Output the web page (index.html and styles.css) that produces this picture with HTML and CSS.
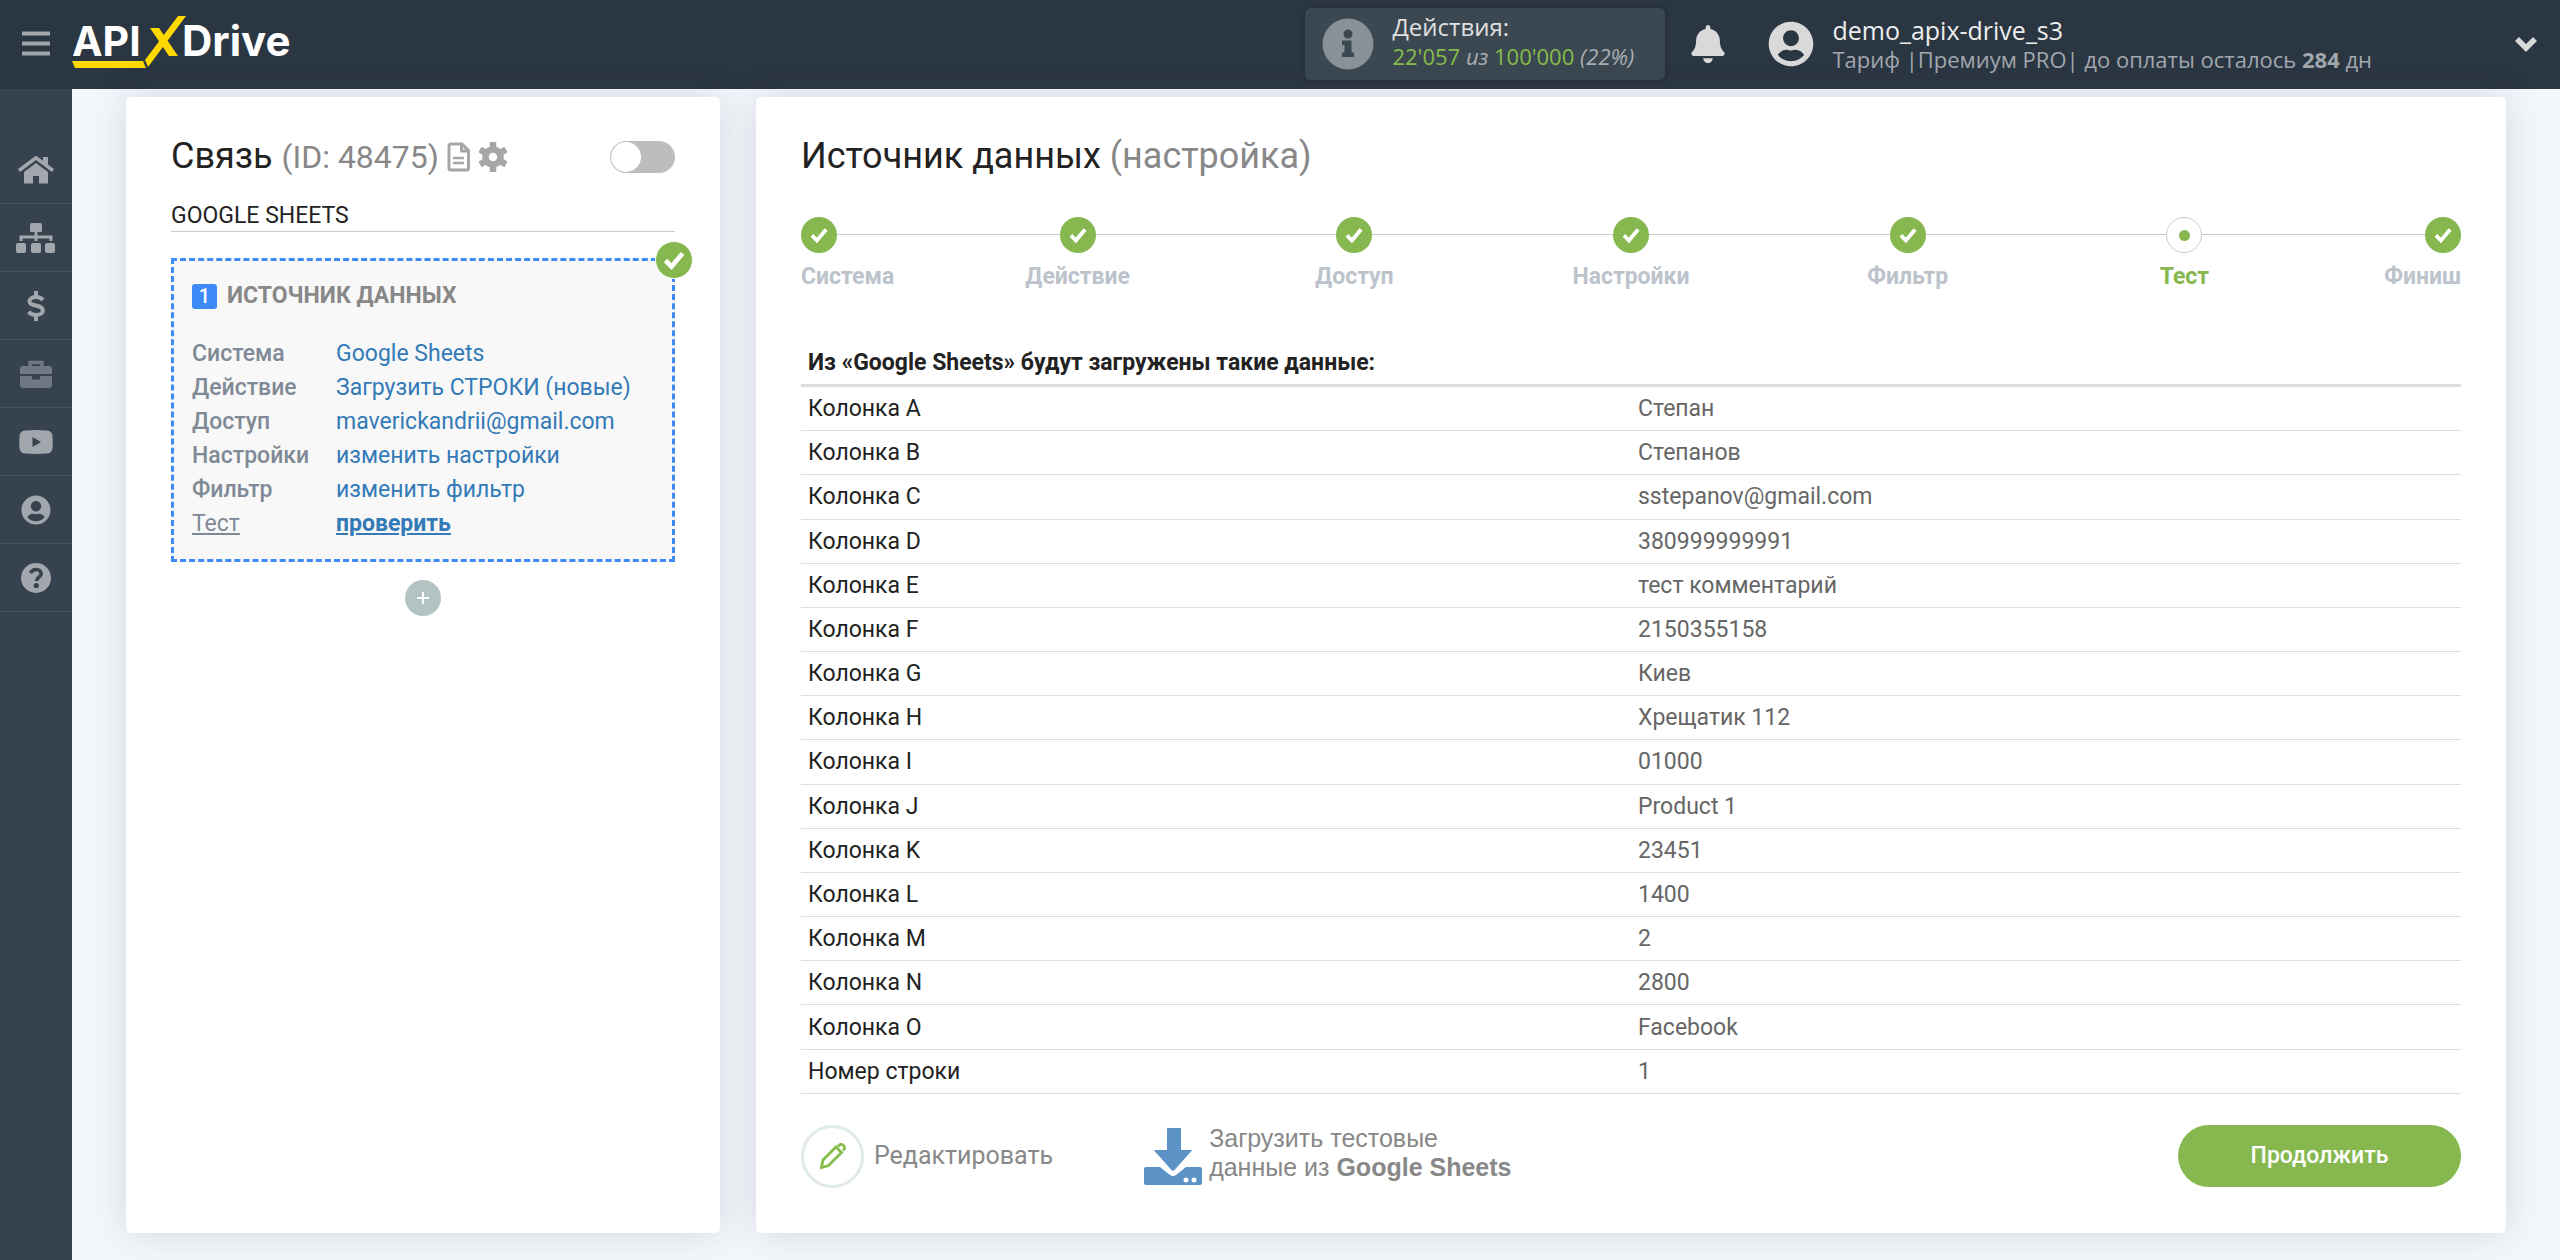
FILE: index.html
```html
<!DOCTYPE html>
<html lang="ru">
<head>
<meta charset="utf-8">
<title>ApiX-Drive</title>
<meta name="viewport" content="width=device-width, initial-scale=1">
<link rel="stylesheet" href="styles.css">
</head>
<body>
<svg class="defs" aria-hidden="true">
  <symbol id="i-check" viewBox="0 0 24 24"><path d="M3.500 12.500 9.500 18.500 20.500 5.500" fill="none" stroke="currentColor" stroke-width="4.600"/></symbol>
  <symbol id="i-user" viewBox="0 0 496 512"><path fill="currentColor" d="M248 8C111 8 0 119 0 256s111 248 248 248 248-111 248-248S385 8 248 8zm0 96c48.600 0 88 39.400 88 88s-39.400 88-88 88-88-39.400-88-88 39.400-88 88-88zm0 344c-58.700 0-111.300-26.600-146.500-68.200 18.800-35.400 55.600-59.800 98.500-59.800 2.400 0 4.800.4 7.100 1.100 13 4.200 26.600 6.900 40.900 6.900 14.300 0 28-2.700 40.900-6.900 2.300-.7 4.700-1.100 7.100-1.100 42.900 0 79.700 24.400 98.500 59.800C359.300 421.400 306.700 448 248 448z"/></symbol>
</svg>

<header class="topbar">
  <button class="icon-button burger" type="button" aria-label="Меню">
    <svg width="28" height="26" viewBox="0 0 28 26"><path d="M0 .5h28v4H0zM0 10.500h28v4H0zM0 20.500h28v4H0z" fill="#a2a7ad"/></svg>
  </button>
  <a class="logo" href="#" aria-label="APIXDrive">
    <svg width="222" height="56" viewBox="0 0 222 56">
      <text class="logo-text" x="0" y="40">API</text>
      <text class="logo-text drive" x="110" y="40">Drive</text>
      <path d="M0 45h71l3 7H3zM106 0h8L76 51l-3-7z" fill="#ffd800"/>
      <path d="M78 12h9l19 28h-9z" fill="#ffd800"/>
    </svg>
  </a>
  <div class="quota">
    <svg width="52" height="52" viewBox="0 0 52 52"><circle cx="26" cy="26" r="25.500" fill="#8a9197"/><circle cx="26" cy="16" r="4.500" fill="#3b4851"/><path d="M20 22.500h9.500v12H32v4.500H20v-4.500h2.500V27H20z" fill="#3b4851"/></svg>
    <div class="quota-text">
      <div class="quota-title">Действия:</div>
      <div class="quota-value"><span class="green">22'057</span> <i>из</i> <span class="green">100'000</span> <i>(22%)</i></div>
    </div>
  </div>
  <button class="icon-button bell" type="button" aria-label="Уведомления">
    <svg width="34" height="38" viewBox="0 0 448 512"><path fill="#d9d9d9" d="M224 512c35.300 0 63.900-28.700 63.900-64H160.100c0 35.300 28.600 64 63.900 64zm215.400-149.700c-19.300-20.800-55.500-52-55.500-154.300 0-77.700-54.500-139.900-127.900-155.200V32c0-17.700-14.300-32-32-32s-32 14.300-32 32v20.800C118.600 68.100 64.100 130.300 64.100 208c0 102.300-36.200 133.500-55.500 154.300-6 6.400-8.700 14.100-8.600 21.700.1 16.400 13 32 32.100 32h383.800c19.100 0 32-15.600 32.100-32 .1-7.600-2.600-15.300-8.600-21.700z"/></svg>
  </button>
  <div class="account">
    <svg class="avatar" width="46" height="46"><use href="#i-user"/></svg>
    <div>
      <div class="account-name">demo_apix-drive_s3</div>
      <div class="account-plan">Тариф |Премиум PRO| до оплаты осталось <b>284</b> дн</div>
    </div>
  </div>
  <button class="icon-button chevron" type="button" aria-label="Открыть меню">
    <svg width="24" height="16" viewBox="0 0 24 16"><path d="M3 3l9 9 9-9" fill="none" stroke="#d9d9d9" stroke-width="5.500"/></svg>
  </button>
</header>

<div class="shell">
  <nav class="sidebar">
    <a href="#" aria-label="Главная"><svg width="36" height="28" viewBox="0 0 36 28"><path d="M1 14.500 18 1.800 35 14.500" fill="none" stroke="currentColor" stroke-width="3.600"/><path d="M25 1h5v9l-5-4zM18 7 30 16v11.500h-9V20h-6v7.500H6V16z" fill="currentColor"/></svg></a>
    <a href="#" aria-label="Связи"><svg width="40" height="30" viewBox="0 0 40 30" fill="currentColor"><rect x="14" width="12" height="9" rx="1.500"/><rect y="20" width="10" height="10" rx="2"/><rect x="15" y="20" width="10" height="10" rx="2"/><rect x="29" y="20" width="10" height="10" rx="2"/><path d="M5 18v-4h30v4M20 8v10" fill="none" stroke="currentColor" stroke-width="3"/></svg></a>
    <a href="#" aria-label="Оплата"><svg width="18" height="30" viewBox="0 0 18 30"><path d="M16 9C14 6.500 12 6 9 6 5.500 6 2.500 7.500 2.500 10.500 2.500 16 15.800 13 15.800 19.500 15.800 22.500 12.500 24 9 24 6 24 3.500 23.200 1.500 20.800M9 0v7M9 23v7" fill="none" stroke="currentColor" stroke-width="4"/></svg></a>
    <a class="dim" href="#" aria-label="Проекты"><svg width="32" height="28" viewBox="0 0 32 28"><path d="M10 7V2.500h12V7" fill="none" stroke="currentColor" stroke-width="3.500"/><path d="M3 6h26q3 0 3 3v5H0V9q0-3 3-3zM0 16h12v3.500h8V16h12v9q0 3-3 3H3q-3 0-3-3z" fill="currentColor"/></svg></a>
    <a href="#" aria-label="Видео"><svg width="34" height="24" viewBox="0 0 34 24"><path fill-rule="evenodd" d="M6 .5Q17-.4 28 .5q5 .5 5.500 5.500.5 6 0 12-.5 5-5.500 5.500-11 .9-22 0Q1 23 .5 18 0 12 .5 6 1 1 6 .5zM13.500 7v10l8.500-5z" fill="currentColor"/></svg></a>
    <a href="#" aria-label="Профиль"><svg width="32" height="30"><use href="#i-user"/></svg></a>
    <a href="#" aria-label="Помощь"><svg width="32" height="30" viewBox="0 0 32 30"><circle cx="16" cy="15" r="15" fill="currentColor"/><path d="M10.500 10C12 7.500 13.800 6.500 16 6.500c3 0 5.200 1.700 5.200 4.300 0 3.200-4.700 3.400-4.700 7.200" fill="none" stroke="#37424f" stroke-width="3.600"/><circle cx="16.300" cy="22.500" r="2.600" fill="#37424f"/></svg></a>
  </nav>

  <main class="content">
    <section class="card">
      <div class="card-head">
        <h1 class="title">Связь <span class="muted conn-id">(ID: 48475)</span></h1>
        <svg width="24" height="30" viewBox="0 0 24 30" fill="none" stroke="#a6a6a6" stroke-width="3"><path d="M2 4q0-2 2-2h11l6.500 6.500V26q0 2-2 2H4q-2 0-2-2zM14.500 2v7h7"/><path d="M6 16h11M6 21h11" stroke-width="2.600"/></svg>
        <svg width="28" height="30" viewBox="0 0 28 30"><circle cx="14" cy="15" r="7.500" fill="none" stroke="#a6a6a6" stroke-width="6.500"/><path d="M14 0v7M14 23v7M1 7.500l6 3.500M21 19l6 3.500M1 22.500 7 19M21 11l6-3.500" stroke="#a6a6a6" stroke-width="6.500"/></svg>
        <input class="switch" type="checkbox" aria-label="Включить связь">
      </div>
      <div class="system">GOOGLE SHEETS</div>
      <div class="source">
        <span class="source-ok"><svg width="24" height="24"><use href="#i-check"/></svg></span>
        <h2 class="source-title"><span class="num">1</span>ИСТОЧНИК ДАННЫХ</h2>
        <dl class="source-list">
          <dt>Система</dt><dd><a href="#">Google Sheets</a></dd>
          <dt>Действие</dt><dd><a href="#">Загрузить СТРОКИ (новые)</a></dd>
          <dt>Доступ</dt><dd><a href="#">maverickandrii@gmail.com</a></dd>
          <dt>Настройки</dt><dd><a href="#">изменить настройки</a></dd>
          <dt>Фильтр</dt><dd><a href="#">изменить фильтр</a></dd>
          <dt class="current">Тест</dt><dd class="current"><a href="#">проверить</a></dd>
        </dl>
      </div>
      <button class="add" type="button" aria-label="Добавить"><svg width="12" height="14" viewBox="0 0 12 14"><path d="M0 7h12M6 1v12" stroke="#fff" stroke-width="2"/></svg></button>
    </section>

    <section class="card">
      <h1 class="title">Источник данных <span class="muted">(настройка)</span></h1>
      <ol class="steps">
        <li><span class="dot"><svg width="20" height="20"><use href="#i-check"/></svg></span>Система</li>
        <li><span class="dot"><svg width="20" height="20"><use href="#i-check"/></svg></span>Действие</li>
        <li><span class="dot"><svg width="20" height="20"><use href="#i-check"/></svg></span>Доступ</li>
        <li><span class="dot"><svg width="20" height="20"><use href="#i-check"/></svg></span>Настройки</li>
        <li><span class="dot"><svg width="20" height="20"><use href="#i-check"/></svg></span>Фильтр</li>
        <li class="active"><span class="dot"></span>Тест</li>
        <li><span class="dot"><svg width="20" height="20"><use href="#i-check"/></svg></span>Финиш</li>
      </ol>
      <table class="data">
        <thead><tr><th colspan="2">Из «Google Sheets» будут загружены такие данные:</th></tr></thead>
        <tbody>
          <tr><td>Колонка A</td><td>Степан</td></tr>
          <tr><td>Колонка B</td><td>Степанов</td></tr>
          <tr><td>Колонка C</td><td>sstepanov@gmail.com</td></tr>
          <tr><td>Колонка D</td><td>380999999991</td></tr>
          <tr><td>Колонка E</td><td>тест комментарий</td></tr>
          <tr><td>Колонка F</td><td>2150355158</td></tr>
          <tr><td>Колонка G</td><td>Киев</td></tr>
          <tr><td>Колонка H</td><td>Хрещатик 112</td></tr>
          <tr><td>Колонка I</td><td>01000</td></tr>
          <tr><td>Колонка J</td><td>Product 1</td></tr>
          <tr><td>Колонка K</td><td>23451</td></tr>
          <tr><td>Колонка L</td><td>1400</td></tr>
          <tr><td>Колонка M</td><td>2</td></tr>
          <tr><td>Колонка N</td><td>2800</td></tr>
          <tr><td>Колонка O</td><td>Facebook</td></tr>
          <tr><td>Номер строки</td><td>1</td></tr>
        </tbody>
      </table>
      <div class="actions">
        <button class="edit" type="button">
          <span class="edit-icon"><svg width="28" height="28" viewBox="0 0 28 28" fill="none" stroke="#86bc4a" stroke-width="2.800"><path d="M2.500 25.500 4 18 17 5l5.500 5.500-13 13z"/><path d="M19 4.500Q21.500 1 24.500 3.500 27 6 24 8.500"/></svg></span>
          Редактировать
        </button>
        <button class="load" type="button">
          <svg width="60" height="60" viewBox="0 0 60 60"><path d="M3 41h14l10 8q3 2 6 0l10-8h14q2 0 2 2v14q0 2-2 2H3q-2 0-2-2V43q0-2 2-2z" fill="#5b93c7"/><path d="M25 1h12q2 0 2 2v20h9q4 0 1 3L32 45q-2 1.500-4 0L11 26q-2-3 1-3h11V3q0-2 2-2z" fill="#5b93c7" stroke="#fff" stroke-width="2"/><circle cx="43" cy="54" r="2.500" fill="#fff"/><circle cx="51" cy="54" r="2.500" fill="#fff"/></svg>
          <span class="load-text">Загрузить тестовые<br>данные из <b>Google Sheets</b></span>
        </button>
        <button class="next" type="button">Продолжить</button>
      </div>
    </section>
  </main>
</div>
</body>
</html>
```
FILE: styles.css
```css
* { box-sizing: border-box; }

body {
  margin: 0;
  min-height: 100vh;
  display: flex;
  flex-direction: column;
  background: #f3f6fb;
  color: #222;
  font: 400 23px/34px Roboto, "Noto Sans", sans-serif;
}

svg { display: block; flex: none; }
.defs { position: absolute; width: 0; height: 0; }
h1, h2, dl, dd, ol { margin: 0; padding: 0; }
button { border: 0; background: none; padding: 0; color: inherit; font: inherit; cursor: pointer; }
a { color: #337ab7; text-decoration: none; }

/* Top bar */
.topbar {
  display: flex;
  align-items: center;
  min-height: 89px;
  padding: 0 22px 2px;
  background: #2b3643;
  font-family: "Open Sans", "Noto Sans", sans-serif;
}
.logo { margin-left: 22px; }
.logo-text { font: 700 41px Inter, sans-serif; fill: #fff; }
.logo-text.drive { font-size: 42px; }
.quota {
  display: flex;
  align-items: center;
  gap: 18px;
  width: 360px;
  height: 72px;
  margin-left: auto;
  padding: 0 17px;
  border-radius: 6px;
  background: #3b4851;
  box-shadow: 0 0 6px rgba(0, 0, 0, .15);
}
.quota-text { padding-bottom: 5px; }
.quota-title { color: #e0e0e0; font-size: 24px; line-height: 30px; }
.quota-value { color: #a9adb2; font-size: 22px; line-height: 28px; }
.green { color: #86bc4a; }
.bell { margin-left: 26px; }
.account { display: flex; align-items: center; gap: 18px; margin-left: 43px; }
.avatar { color: #d9d9d9; }
.account-name { color: #eee; font-size: 25px; line-height: 30px; }
.account-plan { color: #a2a7ad; font-size: 22px; line-height: 28px; }
.chevron { margin-left: 142px; }

/* Side menu and content */
.shell { display: flex; flex: 1; }
.sidebar { width: 72px; padding-top: 47px; background: #37424f; }
.sidebar a {
  display: flex;
  align-items: center;
  justify-content: center;
  height: 68px;
  border-bottom: 1px solid #4a5561;
  color: #a2a7ad;
}
.sidebar .dim { color: #707983; }
.content {
  flex: 1;
  display: grid;
  grid-template-columns: 594fr 1750fr;
  gap: 36px;
  padding: 8px 54px 28px;
}
.card {
  padding: 37px 45px 45px;
  border-radius: 5px;
  background: #fff;
  box-shadow: 0 0 36px rgba(60, 70, 85, .16);
}
.title { font-size: 36px; font-weight: 400; line-height: 44px; }
.muted { color: #888; }
.conn-id { font-size: 32px; }

/* Connection card */
.card-head { display: flex; align-items: center; gap: 8px; }
.switch {
  appearance: none;
  width: 65px;
  height: 32px;
  margin: 0 0 0 auto;
  padding: 1px;
  border-radius: 16px;
  background: #bdbdbd;
}
.switch::before {
  content: "";
  display: block;
  width: 30px;
  height: 30px;
  border-radius: 50%;
  background: #fff;
}
.system { margin-top: 21px; border-bottom: 1px solid #ccc; line-height: 31px; }
.source {
  position: relative;
  margin-top: 26px;
  padding: 18px;
  border: 3px dashed #3e8af7;
  background: #f8f8f8;
}
.source-ok {
  position: absolute;
  top: -20px;
  right: -21px;
  display: grid;
  place-items: center;
  width: 38px;
  height: 38px;
  border: 1px solid #fff;
  border-radius: 50%;
  background: #86b84f;
  color: #fff;
}
.source-title {
  display: flex;
  align-items: center;
  gap: 10px;
  color: #888;
  font-size: 23px;
  font-weight: 700;
  line-height: 34px;
}
.num {
  width: 25px;
  height: 25px;
  border-radius: 3px;
  background: #3e8af7;
  color: #fff;
  font-size: 20px;
  font-weight: 500;
  line-height: 25px;
  text-align: center;
}
.source-list {
  display: grid;
  grid-template-columns: 144px 1fr;
  margin-top: 24px;
}
.source-list dt { color: #7f8a96; font-weight: 500; }
.source-list dt.current { font-weight: 400; text-decoration: underline; }
.source-list .current a { font-weight: 700; text-decoration: underline; }
.add {
  display: grid;
  place-items: center;
  width: 36px;
  height: 36px;
  margin: 18px auto 0;
  border-radius: 50%;
  background: #b3c3c3;
}

/* Steps */
.steps { display: flex; margin-top: 39px; list-style: none; color: #bcc3cb; font-weight: 700; }
.steps li {
  flex: 2;
  display: flex;
  flex-direction: column;
  align-items: center;
  gap: 7px;
  background: linear-gradient(#ccc, #ccc) 0 17px / 100% 1px no-repeat;
}
.steps li:first-child { flex: 1; align-items: flex-start; }
.steps li:last-child { flex: 1; align-items: flex-end; }
.dot {
  display: grid;
  place-items: center;
  width: 36px;
  height: 36px;
  border-radius: 50%;
  background: #86b84f;
  color: #fff;
}
.active { color: #86b84f; }
.active .dot { border: 1px solid #ccc; background: #fff; }
.active .dot::before {
  content: "";
  width: 11px;
  height: 11px;
  border-radius: 50%;
  background: #86b84f;
}

/* Data table */
.data { width: 100%; height: 754px; margin-top: 46px; border-collapse: collapse; table-layout: fixed; }
.data th { padding: 6px 7px 4px; border-bottom: 3px solid #ddd; text-align: left; font-weight: 700; }
.data td { padding: 5px 7px 4px; border-bottom: 1px solid #ddd; }
.data td + td { color: #666; }

/* Footer actions */
.actions { display: flex; align-items: center; margin-top: 30px; color: #888; }
.edit { display: flex; align-items: center; gap: 10px; font-size: 25px; }
.edit-icon {
  display: grid;
  place-items: center;
  width: 63px;
  height: 63px;
  border: 3px solid #e0eae8;
  border-radius: 50%;
}
.load {
  display: flex;
  align-items: center;
  gap: 6px;
  margin-left: 90px;
  text-align: left;
  font-family: "Liberation Sans", Arial, sans-serif;
  font-size: 25px;
  line-height: 29px;
}
.load-text { padding-bottom: 6px; }
.next {
  width: 283px;
  height: 62px;
  margin-left: auto;
  border-radius: 31px;
  background: #86b84f;
  color: #fff;
  font-weight: 500;
}
```
